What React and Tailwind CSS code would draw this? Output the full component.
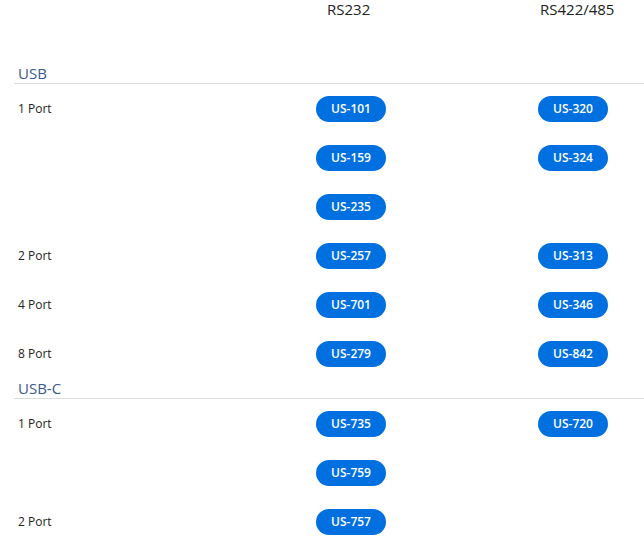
import React from "react";

const groups = [
  {
    name: "USB",
    rows: [
      { label: "1 Port", rs232: "US-101", rs422: "US-320" },
      { label: "", rs232: "US-159", rs422: "US-324" },
      { label: "", rs232: "US-235", rs422: "" },
      { label: "2 Port", rs232: "US-257", rs422: "US-313" },
      { label: "4 Port", rs232: "US-701", rs422: "US-346" },
      { label: "8 Port", rs232: "US-279", rs422: "US-842" },
    ],
  },
  {
    name: "USB-C",
    rows: [
      { label: "1 Port", rs232: "US-735", rs422: "US-720" },
      { label: "", rs232: "US-759", rs422: "" },
      { label: "2 Port", rs232: "US-757", rs422: "" },
    ],
  },
];

const Pill = ({ text }) => {
  if (!text) return <div />;
  return (
    <div className="w-[70px] h-[26px] rounded-full bg-[#0070e0] text-white text-[12px] font-semibold flex items-center justify-center">
      {text}
    </div>
  );
};

const App = () => {
  return (
    <div
      className="w-[644px] h-[544px] bg-white overflow-hidden"
      style={{ fontFamily: '"Open Sans", "Liberation Sans", sans-serif' }}
    >
      <div className="h-[63px] grid grid-cols-[316px_222px_1fr] text-[15px] leading-[18px] text-[#222]">
        <div />
        <div className="pl-[11px]">RS232</div>
        <div className="pl-[2px]">RS422/485</div>
      </div>
      {groups.map((group) => (
        <div key={group.name}>
          <div className="ml-[14px] pl-[4px] h-[21px] leading-[20px] text-[15px] text-[#3a5a8a] border-b border-[#dcdcdc]">
            {group.name}
          </div>
          {group.rows.map((row, i) => (
            <div
              key={i}
              className="h-[49px] grid grid-cols-[298px_222px_1fr] items-center pl-[18px]"
            >
              <div className="text-[12px] text-[#222]">{row.label}</div>
              <Pill text={row.rs232} />
              <Pill text={row.rs422} />
            </div>
          ))}
        </div>
      ))}
    </div>
  );
};

export default App;
